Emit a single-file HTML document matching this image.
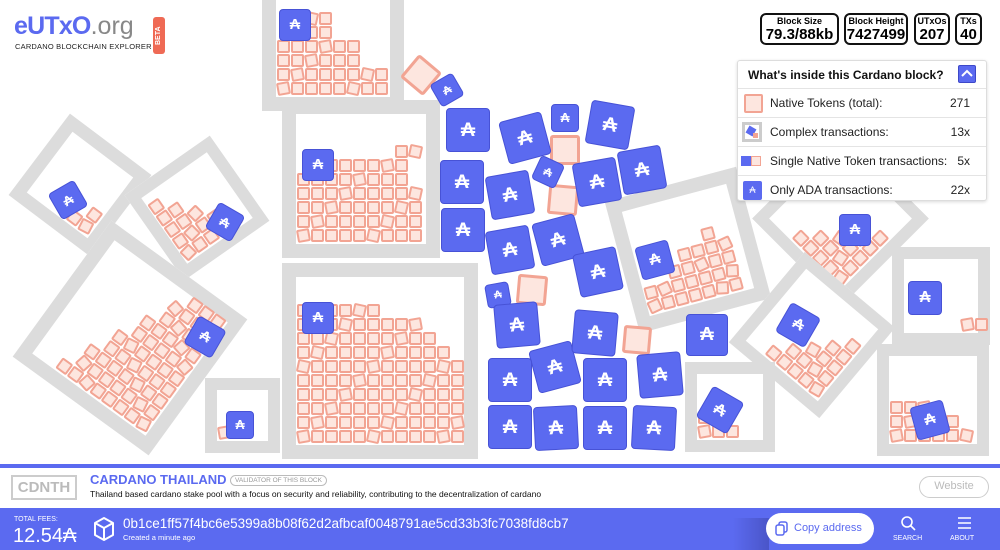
<!DOCTYPE html>
<html><head><meta charset="utf-8">
<style>
*{box-sizing:border-box;margin:0;padding:0}
body{width:1000px;height:550px;overflow:hidden;background:#fff;font-family:"Liberation Sans","DejaVu Sans",sans-serif;position:relative}
.fr{position:absolute;border:14px solid #dcdcdc;background:#fff}
.pk{position:absolute;width:13px;height:13px;background:#fde6df;border:2px solid #f2a493;border-radius:2px}
.bt{position:absolute;background:#5b6af0;border:1.5px solid #4752d6;border-radius:4px;color:#fff;display:flex;align-items:center;justify-content:center;font-weight:bold}
.bp{position:absolute;background:#fde6df;border:3px solid #f2a493;border-radius:3px}
.stat{position:absolute;top:13px;height:32px;border:2px solid #111;border-radius:6px;text-align:center;background:#fff}
.stat .l{font-size:9px;font-weight:bold;line-height:11px;margin-top:1px}
.stat .v{font-size:15px;font-weight:bold;line-height:16px}
#leg{position:absolute;left:737px;top:60px;width:250px;height:141px;background:#fff;border:1px solid #ddd;border-radius:3px;box-shadow:0 1px 3px rgba(0,0,0,.15)}
#leg .row{height:29px;border-top:1px solid #e4e4e4;display:flex;align-items:center;font-size:12px;color:#222;position:relative}
#leg .row .n{position:absolute;right:16px;font-size:12px}
</style></head><body>
<div id="scene"></div>

<div style="position:absolute;left:14px;top:12px;font-size:25px;font-weight:bold;color:#5b6af0;letter-spacing:-0.8px;line-height:28px">eUTxO<span style="font-weight:normal;color:#888;letter-spacing:0">.org</span></div>
<div style="position:absolute;left:15px;top:42px;font-size:7.5px;color:#222;letter-spacing:.2px">CARDANO BLOCKCHAIN EXPLORER</div>
<div style="position:absolute;left:153px;top:17px;width:12px;height:37px;background:#ef6a55;border-radius:3px;color:#fff;font-size:7px;font-weight:bold;writing-mode:vertical-rl;transform:rotate(180deg);text-align:center;line-height:12px">BETA</div>

<div class="stat" style="left:760px;width:79px"><div class="l">Block Size</div><div class="v">79.3/88kb</div></div>
<div class="stat" style="left:844px;width:64px"><div class="l">Block Height</div><div class="v">7427499</div></div>
<div class="stat" style="left:914px;width:36px"><div class="l">UTxOs</div><div class="v">207</div></div>
<div class="stat" style="left:955px;width:27px"><div class="l">TXs</div><div class="v">40</div></div>

<div id="leg">
 <div style="height:27px;display:flex;align-items:center;padding-left:10px;font-size:12px;font-weight:bold;color:#111">What's inside this Cardano block?
  <div style="position:absolute;right:10px;top:4px;width:18px;height:18px;background:#5b6af0;border:1px solid #3d48c9;border-radius:2px"><svg width="16" height="16" viewBox="0 0 16 16"><path d="M3 10 L8 5 L13 10" stroke="#fff" stroke-width="2" fill="none"/></svg></div></div>
 <div class="row"><div style="position:absolute;left:6px;width:19px;height:19px;background:#fde6df;border:2px solid #f2a493;border-radius:2px"></div><span style="margin-left:32px">Native Tokens (total):</span><span class="n">271</span></div>
 <div class="row"><div style="position:absolute;left:4px;width:20px;height:20px;border:3px solid #ccc;background:#fff"><div style="position:absolute;left:2px;top:2px;width:8px;height:8px;background:#5b6af0;transform:rotate(30deg)"></div><div style="position:absolute;right:1px;bottom:1px;width:5px;height:5px;background:#f2a493"></div></div><span style="margin-left:32px">Complex transactions:</span><span class="n">13x</span></div>
 <div class="row"><div style="position:absolute;left:3px;width:10px;height:10px;background:#5b6af0"></div><div style="position:absolute;left:13px;width:10px;height:10px;background:#fde6df;border:1px solid #f2a493"></div><span style="margin-left:32px">Single Native Token transactions:</span><span class="n">5x</span></div>
 <div class="row"><div style="position:absolute;left:5px;width:19px;height:19px;background:#5b6af0;border-radius:2px;color:#fff;font-size:9px;text-align:center;line-height:19px">₳</div><span style="margin-left:32px">Only ADA transactions:</span><span class="n">22x</span></div>
</div>

<div style="position:absolute;left:0;top:464px;width:1000px;height:4px;background:#5b6af0"></div>
<div style="position:absolute;left:0;top:468px;width:1000px;height:40px;background:#fff"></div>
<div style="position:absolute;left:11px;top:475px;width:66px;height:25px;border:2px solid #ccc;color:#bbb;font-size:15px;font-weight:bold;text-align:center;line-height:21px">CDNTH</div>
<div style="position:absolute;left:90px;top:472px;font-size:13px;font-weight:bold;color:#5b6af0">CARDANO THAILAND</div>
<div style="position:absolute;left:230px;top:475px;font-size:6.5px;color:#999;border:1px solid #bbb;border-radius:6px;padding:1px 4px">VALIDATOR OF THIS BLOCK</div>
<div style="position:absolute;left:90px;top:489px;font-size:8.5px;color:#111">Thailand based cardano stake pool with a focus on security and reliability, contributing to the decentralization of cardano</div>
<div style="position:absolute;left:919px;top:476px;width:70px;height:22px;border:1.5px solid #ccc;border-radius:11px;color:#bbb;font-size:11px;text-align:center;line-height:19px">Website</div>

<div style="position:absolute;left:0;top:508px;width:1000px;height:42px;background:#5b6af0;color:#fff">
 <div style="position:absolute;left:14px;top:8px;font-size:7px">TOTAL FEES:</div>
 <div style="position:absolute;left:13px;top:17px;font-size:20px">12.54₳</div>
 <svg style="position:absolute;left:93px;top:8px" width="22" height="26" viewBox="0 0 22 26"><path d="M11 2 L20 7 L20 19 L11 24 L2 19 L2 7 Z M2 7 L11 12 L20 7 M11 12 L11 24" stroke="#fff" stroke-width="2" fill="none" stroke-linejoin="round"/></svg>
 <div style="position:absolute;left:123px;top:8px;font-size:13.5px">0b1ce1ff57f4bc6e5399a8b08f62d2afbcaf0048791ae5cd33b3fc7038fd8cb7</div>
 <div style="position:absolute;left:123px;top:25px;font-size:7.5px">Created a minute ago</div>
 <div style="position:absolute;left:733px;top:10px;width:36px;height:32px;background:linear-gradient(90deg,#5b6af0,#4a55c8)"></div>
 <div style="position:absolute;left:766px;top:5px;width:108px;height:31px;background:#fff;border-radius:16px;color:#5b6af0;font-size:11px;line-height:31px;padding-left:28px">Copy address
  <svg style="position:absolute;left:9px;top:8px" width="14" height="15" viewBox="0 0 14 15"><rect x="4" y="1" width="8" height="10" rx="2" stroke="#5b6af0" stroke-width="1.5" fill="none"/><rect x="1" y="4" width="8" height="10" rx="2" stroke="#5b6af0" stroke-width="1.5" fill="#fff"/></svg></div>
 <svg style="position:absolute;left:900px;top:7px" width="16" height="17" viewBox="0 0 16 17"><circle cx="7" cy="7" r="5" stroke="#fff" stroke-width="1.6" fill="none"/><path d="M10.5 10.5 L15 15" stroke="#fff" stroke-width="1.6"/></svg>
 <div style="position:absolute;left:893px;top:27px;font-size:7px">SEARCH</div>
 <svg style="position:absolute;left:957px;top:8px" width="15" height="14" viewBox="0 0 15 14"><path d="M1 2H14M1 7H14M1 12H14" stroke="#fff" stroke-width="1.6"/></svg>
 <div style="position:absolute;left:950px;top:27px;font-size:7px">ABOUT</div>
</div>

<script>
var S=document.getElementById('scene');
function el(c,st,html){var d=document.createElement('div');d.className=c;d.style.cssText=st;if(html)d.innerHTML=html;S.appendChild(d);return d;}
function pk(d,x,y,i,r){var p=document.createElement('div');p.className='pk';p.style.left=x+'px';p.style.top=y+'px';
 if((i*7+r*3)%5==0)p.style.transform='rotate('+((i+r)%2?12:-10)+'deg)';d.appendChild(p);}
function frame(cx,cy,s,rot,b,rows,corner,wr){
 var d=el('fr','left:'+(cx-s/2)+'px;top:'+(cy-s/2)+'px;width:'+s+'px;height:'+s+'px;border-width:'+b+'px;transform:rotate('+rot+'deg)');
 var inner=s-2*b, n=Math.floor(inner/14); wr=wr||1;
 if(typeof rows=='number'){
  for(var r=0;r<n;r++)for(var i=0;i<n;i++){if(i+r*wr>rows)continue;
   var x=corner=='br'?inner-15-i*14:1+i*14; pk(d,x,inner-15-r*14,i,r);}
  return;}
 for(var r=0;r<rows.length;r++){var st=rows[r][0],c=rows[r][1];
  for(var i=0;i<c;i++)pk(d,1+(st+i)*14,inner-15-r*14,i,r);}
}
function bt(cx,cy,s,rot){
 el('bt','left:'+(cx-s/2)+'px;top:'+(cy-s/2)+'px;width:'+s+'px;height:'+s+'px;font-size:'+(s*0.45)+'px;transform:rotate('+rot+'deg)','₳');}
function bp(cx,cy,s,rot){el('bp','left:'+(cx-s/2)+'px;top:'+(cy-s/2)+'px;width:'+s+'px;height:'+s+'px;transform:rotate('+rot+'deg)');}
function R(n,c){var a=[];for(var i=0;i<n;i++)a.push([0,c]);return a;}

frame(333,40,142,0,14,[[0,8],[0,8],[0,6],[0,6],[2,2],[2,2]]);
frame(80,185,102,37,13,1,'br');
frame(197,208,104,-35,12,4,'bl');
frame(130,338,168,36,14,7,'br',0.5);
frame(361,179,158,0,14,[[0,9],[0,9],[0,9],[0,9],[0,8],[1,7],[7,2]]);
frame(380,361,196,0,14,R(6,12).concat([[0,11],[0,10],[0,9],[0,6]]));
frame(242,415,75,0,12,[[0,1]]);
frame(688,250,136,-15,14,[[0,7],[0,7],[2,5],[3,4],[5,1]]);
frame(840,218,125,45,12,4,'br');
frame(812,335,118,40,12,4,'br');
frame(941,296,98,0,12,[[4,2]]);
frame(730,407,90,0,12,[[0,3],[0,2]]);
frame(933,400,112,0,12,[[0,6],[0,5],[0,3]]);

var T=[[468,130,44,0],[525,138,44,-15],[565,118,28,0],[610,125,44,10],[462,182,44,0],[510,195,44,-10],[548,172,26,25],[597,182,44,-10],[642,170,44,-10],[463,230,44,0],[510,250,44,-10],[558,240,44,-15],[598,272,44,-12],[498,295,24,-10],[517,325,44,-5],[555,367,44,-15],[595,333,44,5],[660,375,44,-5],[707,335,42,0],[510,380,44,0],[605,380,44,0],[510,427,44,0],[556,428,44,-3],[605,428,44,0],[654,428,44,3],
[447,90,26,-30],[295,25,32,0],[68,200,30,-30],[225,222,30,30],[205,337,32,30],[318,165,32,0],[318,318,32,0],[240,425,28,0],[655,260,34,-15],[855,230,32,0],[798,325,34,30],[925,298,34,0],[720,410,36,30],[930,420,34,-15]];
bp(565,150,30,0);bp(563,200,30,5);bp(532,290,30,5);bp(637,340,28,5);bp(421,75,30,40);
T.forEach(function(t){bt(t[0],t[1],t[2],t[3]);});
</script>
</body></html>
